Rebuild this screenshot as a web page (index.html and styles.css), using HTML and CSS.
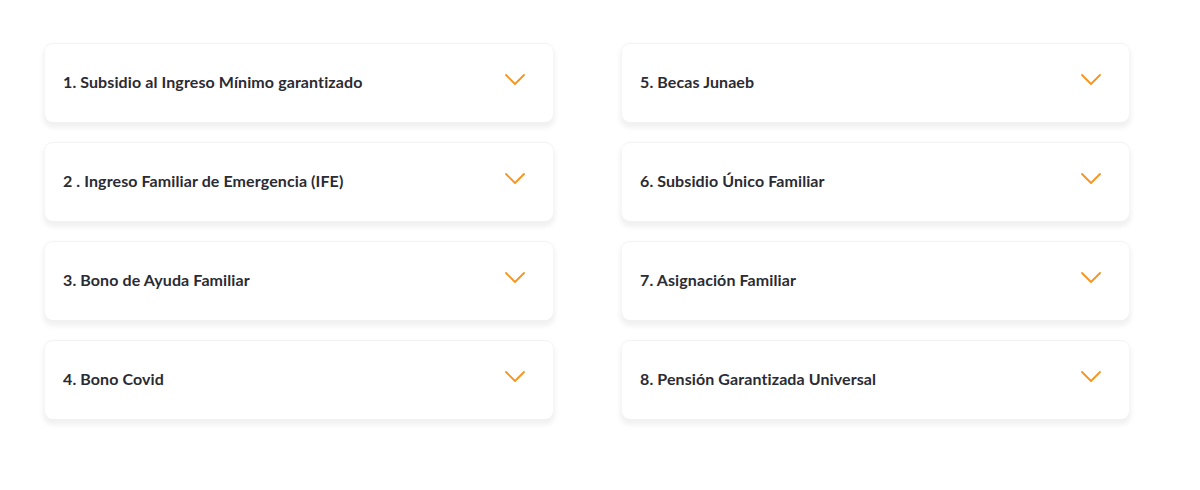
FILE: index.html
```html
<!DOCTYPE html>
<html lang="es">
<head>
<meta charset="utf-8">
<title>Beneficios</title>
<link rel="stylesheet" href="styles.css">
</head>
<body>
<div class="accordion">
  <div class="col">
    <div class="item"><span class="title">1. Subsidio al Ingreso Mínimo garantizado</span><svg class="chev" viewBox="0 0 20 11"><path d="M1 1 L10 10 L19 1"/></svg></div>
    <div class="item"><span class="title">2 . Ingreso Familiar de Emergencia (IFE)</span><svg class="chev" viewBox="0 0 20 11"><path d="M1 1 L10 10 L19 1"/></svg></div>
    <div class="item"><span class="title">3. Bono de Ayuda Familiar</span><svg class="chev" viewBox="0 0 20 11"><path d="M1 1 L10 10 L19 1"/></svg></div>
    <div class="item"><span class="title">4. Bono Covid</span><svg class="chev" viewBox="0 0 20 11"><path d="M1 1 L10 10 L19 1"/></svg></div>
  </div>
  <div class="col">
    <div class="item"><span class="title">5. Becas Junaeb</span><svg class="chev" viewBox="0 0 20 11"><path d="M1 1 L10 10 L19 1"/></svg></div>
    <div class="item"><span class="title">6. Subsidio Único Familiar</span><svg class="chev" viewBox="0 0 20 11"><path d="M1 1 L10 10 L19 1"/></svg></div>
    <div class="item"><span class="title">7. Asignación Familiar</span><svg class="chev" viewBox="0 0 20 11"><path d="M1 1 L10 10 L19 1"/></svg></div>
    <div class="item"><span class="title">8. Pensión Garantizada Universal</span><svg class="chev" viewBox="0 0 20 11"><path d="M1 1 L10 10 L19 1"/></svg></div>
  </div>
</div>
</body>
</html>
```
FILE: styles.css
```css
html, body {
  margin: 0;
  padding: 0;
  background: #ffffff;
}
body {
  font-family: "Lato", "Noto Sans", sans-serif;
  color: #2b2b33;
}
.accordion {
  display: grid;
  grid-template-columns: 508px 507px;
  column-gap: 69px;
  padding: 43px 0 70px 45px;
}
.col {
  display: flex;
  flex-direction: column;
  gap: 20px;
}
.item {
  height: 79px;
  box-sizing: border-box;
  background: #fff;
  border-radius: 8px;
  border-top: 1px solid #f3f3f4;
  box-shadow: 0 4px 5px 2px rgba(20, 20, 40, 0.06);
  display: flex;
  align-items: center;
  justify-content: space-between;
  padding: 0 28px 0 18px;
}
.title {
  font-size: 16px;
  font-weight: 700;
  letter-spacing: 0.1px;
  margin-top: -3px;
}
.chev {
  width: 20px;
  height: 11px;
  margin-top: -8px;
  fill: none;
  stroke: #f7941d;
  stroke-width: 1.8;
  stroke-linecap: round;
  stroke-linejoin: round;
}
```
